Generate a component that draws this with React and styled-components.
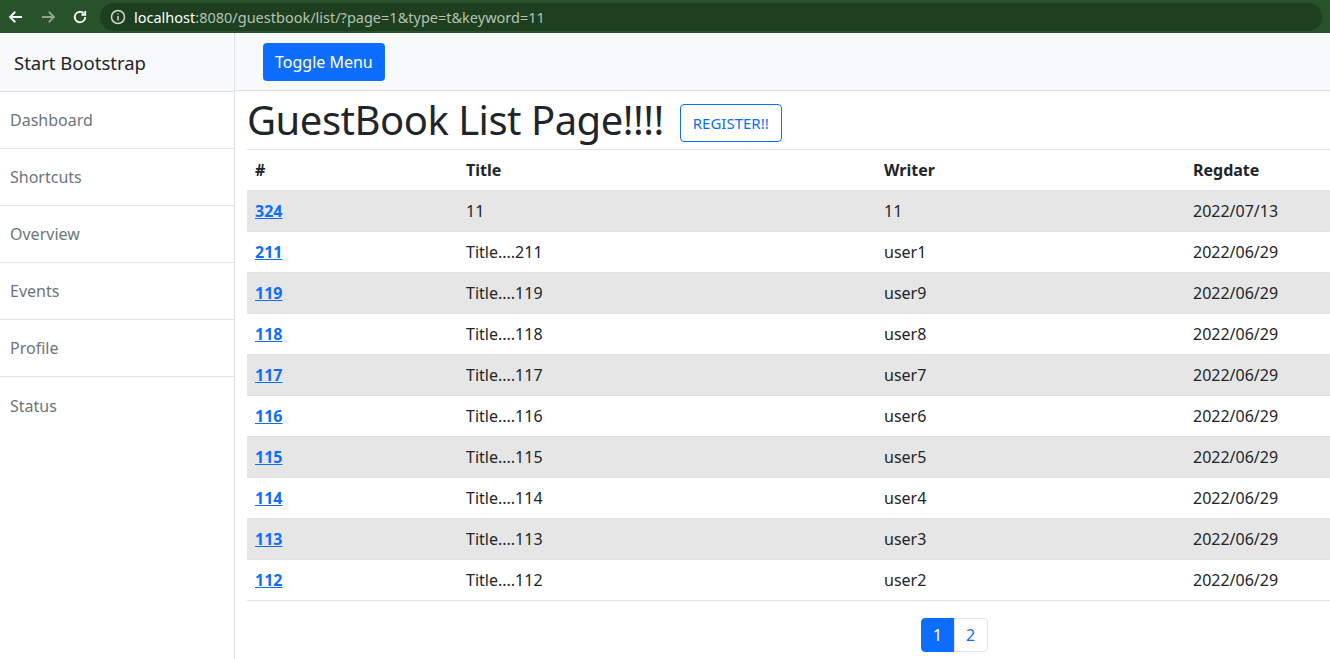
import styled, { createGlobalStyle } from 'styled-components';

const GlobalStyle = createGlobalStyle`
  html, body {
    margin: 0;
    padding: 0;
    overflow: hidden;
    background: #ffffff;
  }
  body {
    font-family: "Noto Sans", "Noto Sans CJK KR", sans-serif;
    font-size: 16px;
    color: #212529;
  }
  * {
    box-sizing: border-box;
  }
`;

const Chrome = styled.div`
  height: 33px;
  background: #28532a;
  display: flex;
  align-items: center;
  padding-left: 7px;
  gap: 14px;
`;

const NavIcon = styled.svg`
  width: 18px;
  height: 18px;
  flex: none;
`;

const AddressBar = styled.div`
  flex: 1;
  height: 28px;
  margin-left: -3px;
  margin-right: 8px;
  border-radius: 14px;
  background: #1d3f1f;
  display: flex;
  align-items: center;
  padding-left: 10px;
  gap: 8px;
  font-size: 14.5px;
  color: #b5c2b5;

  & b {
    color: #ffffff;
    font-weight: 400;
  }
`;

const Layout = styled.div`
  display: flex;
  height: 626px;
  width: 1673px;
`;

const Sidebar = styled.div`
  width: 235px;
  flex: none;
  border-right: 1px solid #dee2e6;
  background: #ffffff;
`;

const SidebarHeading = styled.div`
  height: 59px;
  padding-left: 14px;
  display: flex;
  align-items: center;
  font-size: 18.5px;
  background: #f8f9fa;
  border-bottom: 1px solid #dee2e6;
`;

const SideItem = styled.div`
  height: 57px;
  padding-left: 10px;
  display: flex;
  align-items: center;
  color: #6c757d;
  border-bottom: 1px solid #dee2e6;

  &:last-child {
    border-bottom: none;
  }
`;

const Main = styled.div`
  flex: 1;
  display: flex;
  flex-direction: column;
`;

const TopNav = styled.div`
  height: 58px;
  background: #f8f9fa;
  border-bottom: 1px solid #dee2e6;
  display: flex;
  align-items: center;
  padding-left: 28px;
`;

const ToggleBtn = styled.button`
  height: 38px;
  padding: 0 12px;
  background: #0d6efd;
  color: #ffffff;
  border: none;
  border-radius: 4px;
  font-family: inherit;
  font-size: 16px;
`;

const Content = styled.div`
  padding: 0 12px;
`;

const TitleRow = styled.div`
  display: flex;
  align-items: center;
  gap: 16px;
  height: 58px;
`;

const PageTitle = styled.h1`
  margin: 0;
  font-size: 40px;
  font-weight: 400;
  line-height: 1;
  letter-spacing: -0.5px;
`;

const OutlineBtn = styled.button`
  height: 38px;
  padding: 0 12px;
  background: #ffffff;
  color: #0d6efd;
  border: 1px solid #0d6efd;
  border-radius: 4px;
  font-family: inherit;
  font-size: 15px;
  margin-top: 6px;
`;

const Table = styled.table`
  width: 100%;
  border-collapse: collapse;
  border-top: 1px solid #dee2e6;
`;

const Th = styled.th`
  text-align: left;
  font-weight: 700;
  height: 41px;
  padding: 0 8px;
  border-bottom: 1px solid #dee2e6;
  width: ${(p) => p.$w || 'auto'};
`;

const Tr = styled.tr`
  background: ${(p) => (p.$striped ? '#e6e6e6' : '#ffffff')};
`;

const Td = styled.td`
  height: 41px;
  padding: 0 8px;
  border-bottom: 1px solid #dee2e6;
`;

const NumLink = styled.a`
  color: #0d6efd;
  font-weight: 700;
  text-decoration: underline;
`;

const Pager = styled.div`
  display: flex;
  justify-content: center;
  padding-top: 17px;
`;

const PageLink = styled.div`
  width: 34px;
  height: 34px;
  display: flex;
  align-items: center;
  justify-content: center;
  border: 1px solid ${(p) => (p.$active ? '#0d6efd' : '#dee2e6')};
  background: ${(p) => (p.$active ? '#0d6efd' : '#ffffff')};
  color: ${(p) => (p.$active ? '#ffffff' : '#0d6efd')};
  margin-left: ${(p) => (p.$active ? '0' : '-1px')};
  border-radius: ${(p) => (p.$first ? '4px 0 0 4px' : '0 4px 4px 0')};
`;

const menu = ['Dashboard', 'Shortcuts', 'Overview', 'Events', 'Profile', 'Status'];

const rows = [
  ['324', '11', '11', '2022/07/13'],
  ['211', 'Title....211', 'user1', '2022/06/29'],
  ['119', 'Title....119', 'user9', '2022/06/29'],
  ['118', 'Title....118', 'user8', '2022/06/29'],
  ['117', 'Title....117', 'user7', '2022/06/29'],
  ['116', 'Title....116', 'user6', '2022/06/29'],
  ['115', 'Title....115', 'user5', '2022/06/29'],
  ['114', 'Title....114', 'user4', '2022/06/29'],
  ['113', 'Title....113', 'user3', '2022/06/29'],
  ['112', 'Title....112', 'user2', '2022/06/29'],
];

const App = () => {
  return (
    <>
      <GlobalStyle />
      <Chrome>
        <NavIcon viewBox="0 0 24 24" fill="none" stroke="#ffffff" strokeWidth="2.4">
          <path d="M20 12H5M11 5l-7 7 7 7" />
        </NavIcon>
        <NavIcon viewBox="0 0 24 24" fill="none" stroke="#8fa68f" strokeWidth="2.4">
          <path d="M4 12h15M13 5l7 7-7 7" />
        </NavIcon>
        <NavIcon viewBox="0 0 24 24" fill="none" stroke="#ffffff" strokeWidth="2.4">
          <path d="M19 12a7 7 0 1 1-2.1-5" />
          <path d="M19 4v5h-5" />
        </NavIcon>
        <AddressBar>
          <svg width="16" height="16" viewBox="0 0 16 16" fill="none" stroke="#d0d8d0" strokeWidth="1.5">
            <circle cx="8" cy="8" r="6.5" />
            <path d="M8 7v4.5M8 4.5v1" />
          </svg>
          <span>
            <b>localhost</b>:8080/guestbook/list/?page=1&amp;type=t&amp;keyword=11
          </span>
        </AddressBar>
      </Chrome>
      <Layout>
        <Sidebar>
          <SidebarHeading>Start Bootstrap</SidebarHeading>
          {menu.map((m) => (
            <SideItem key={m}>{m}</SideItem>
          ))}
        </Sidebar>
        <Main>
          <TopNav>
            <ToggleBtn>Toggle Menu</ToggleBtn>
          </TopNav>
          <Content>
            <TitleRow>
              <PageTitle>GuestBook List Page!!!!</PageTitle>
              <OutlineBtn>REGISTER!!</OutlineBtn>
            </TitleRow>
            <Table>
              <thead>
                <tr>
                  <Th $w="211px">#</Th>
                  <Th $w="418px">Title</Th>
                  <Th $w="309px">Writer</Th>
                  <Th>Regdate</Th>
                </tr>
              </thead>
              <tbody>
                {rows.map((r, i) => (
                  <Tr key={r[0]} $striped={i % 2 === 0}>
                    <Td>
                      <NumLink href="#">{r[0]}</NumLink>
                    </Td>
                    <Td>{r[1]}</Td>
                    <Td>{r[2]}</Td>
                    <Td>{r[3]}</Td>
                  </Tr>
                ))}
              </tbody>
            </Table>
            <Pager>
              <PageLink $active $first>1</PageLink>
              <PageLink>2</PageLink>
            </Pager>
          </Content>
        </Main>
      </Layout>
    </>
  );
};

export default App;
